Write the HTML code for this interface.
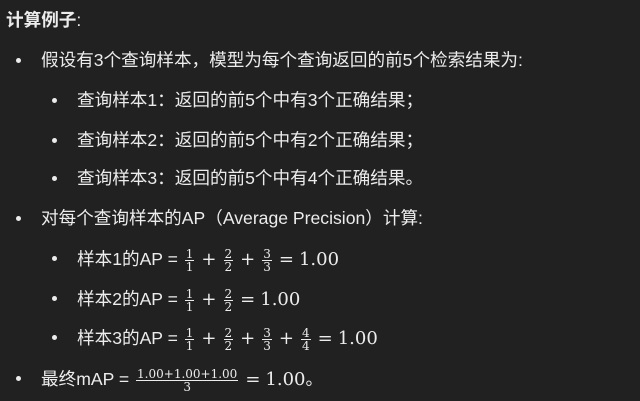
<!DOCTYPE html>
<html><head><meta charset="utf-8"><style>
body{margin:0;background:#212121;color:#ececec;font-family:"Liberation Sans","Noto Sans CJK SC",sans-serif;font-size:17.6px;width:640px;height:401px;overflow:hidden;position:relative}
.l{position:absolute;white-space:nowrap;line-height:20px}
.d{position:absolute;width:5px;height:5px;border-radius:50%;background:#ececec}
.m{font-family:"DejaVu Serif","Liberation Serif",serif;font-size:18px}
.f{display:inline-block;vertical-align:middle;text-align:center;font-family:"DejaVu Serif","Liberation Serif",serif;font-size:12px;line-height:12px;margin:0 2px}
.f span{display:block;padding:0 1px}
.f span:first-child{border-bottom:1px solid #ececec}
.op{margin:0 5px}
</style></head><body>
<div class="l" style="left:6px;top:10px;font-weight:bold">计算例子<span style="font-weight:normal">:</span></div>
<div class="d" style="left:16px;top:58px"></div><div class="l" style="left:41px;top:50px">假设有3个查询样本，模型为每个查询返回的前5个检索结果为:</div>
<div class="d" style="left:52px;top:98px"></div><div class="l" style="left:77px;top:90px">查询样本1：返回的前5个中有3个正确结果；</div>
<div class="d" style="left:52px;top:138px"></div><div class="l" style="left:77px;top:130px">查询样本2：返回的前5个中有2个正确结果；</div>
<div class="d" style="left:52px;top:176px"></div><div class="l" style="left:77px;top:168px">查询样本3：返回的前5个中有4个正确结果。</div>
<div class="d" style="left:16px;top:216px"></div><div class="l" style="left:41px;top:208px">对每个查询样本的AP（Average Precision）计算:</div>
<div class="d" style="left:52px;top:256px"></div><div class="l" style="left:77px;top:248px">样本1的AP = <span class="f"><span>1</span><span>1</span></span><span class="m op">+</span><span class="f"><span>2</span><span>2</span></span><span class="m op">+</span><span class="f"><span>3</span><span>3</span></span><span class="m op">=</span><span class="m">1.00</span></div>
<div class="d" style="left:52px;top:296px"></div><div class="l" style="left:77px;top:288px">样本2的AP = <span class="f"><span>1</span><span>1</span></span><span class="m op">+</span><span class="f"><span>2</span><span>2</span></span><span class="m op">=</span><span class="m">1.00</span></div>
<div class="d" style="left:52px;top:335px"></div><div class="l" style="left:77px;top:327px">样本3的AP = <span class="f"><span>1</span><span>1</span></span><span class="m op">+</span><span class="f"><span>2</span><span>2</span></span><span class="m op">+</span><span class="f"><span>3</span><span>3</span></span><span class="m op">+</span><span class="f"><span>4</span><span>4</span></span><span class="m op">=</span><span class="m">1.00</span></div>
<div class="d" style="left:16px;top:376px"></div><div class="l" style="left:41px;top:368px">最终mAP = <span class="f"><span>1.00+1.00+1.00</span><span>3</span></span><span class="m op">=</span><span class="m">1.00</span>。</div>
</body></html>
